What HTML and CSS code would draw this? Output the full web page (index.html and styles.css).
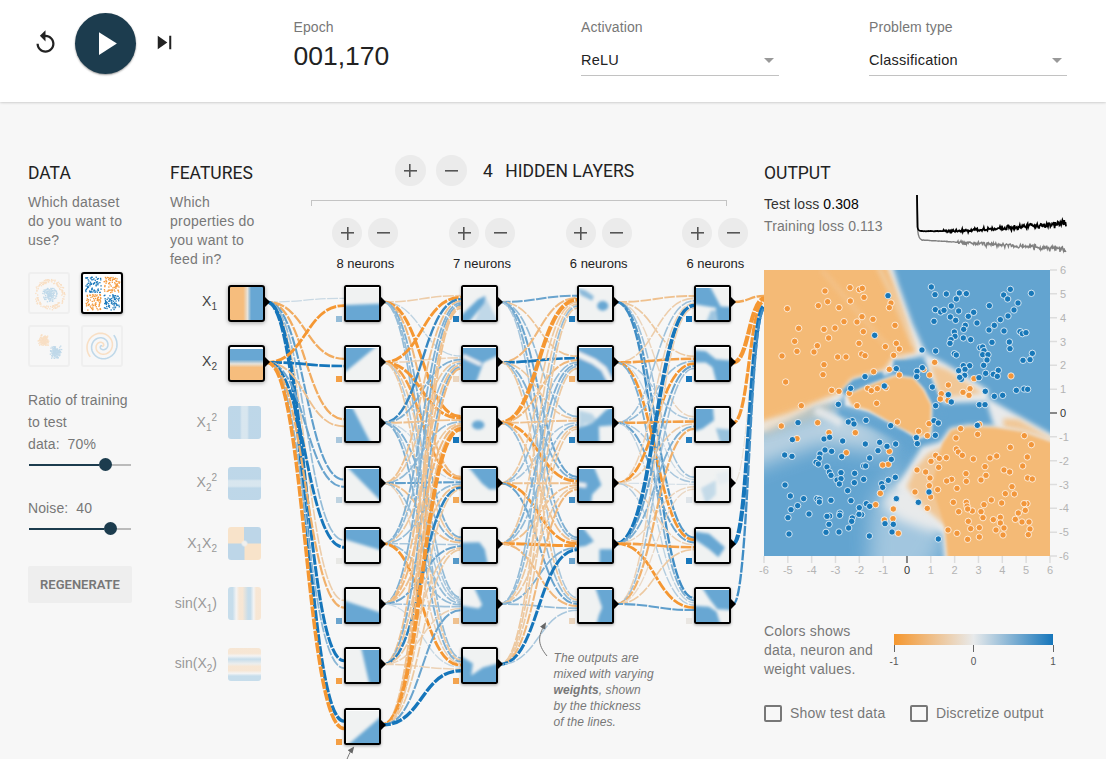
FILE: index.html
```html
<!DOCTYPE html>
<html lang="en">
<head>
<meta charset="utf-8">
<title>Neural network playground</title>
<link rel="stylesheet" href="styles.css">
</head>
<body>
<div class="page">
  <header class="topbar">
    <div class="controls">
      <svg class="icon-reset" viewBox="0 0 24 24"><path d="M12 5V1L7 6l5 5V7c3.31 0 6 2.69 6 6s-2.69 6-6 6-6-2.69-6-6H4c0 4.42 3.58 8 8 8s8-3.58 8-8-3.58-8-8-8z"/></svg>
      <div class="play"><svg viewBox="0 0 24 24"><path d="M8 5v14l11-7z"/></svg></div>
      <svg class="icon-step" viewBox="0 0 24 24"><path d="M6 18l8.5-6L6 6v12zM16.2 6v12h1.8V6h-1.8z"/></svg>
    </div>
    <div class="stat"><div class="label">Epoch</div><div class="epoch">001,170</div></div>
    <div class="stat"><div class="label">Activation</div><div class="select">ReLU<i class="caret"></i></div></div>
    <div class="stat"><div class="label">Problem type</div><div class="select">Classification<i class="caret"></i></div></div>
  </header>
  <svg class="links" id="links" width="1106" height="759" viewBox="0 0 1106 759"></svg>
  <main class="main">
    <section class="data">
      <h3>DATA</h3>
      <p class="lead">Which dataset<br>do you want to<br>use?</p>
      <div class="datasets" id="datasets"></div>
      <div class="slider-label ratio">Ratio of training<br>to test<br>data:&nbsp; 70%</div>
      <div class="slider at-ratio"><span class="fill"></span><span class="knob"></span></div>
      <div class="slider-label noise">Noise:&nbsp; 40</div>
      <div class="slider at-noise"><span class="fill"></span><span class="knob"></span></div>
      <div class="button">REGENERATE</div>
    </section>
    <section class="features">
      <h3>FEATURES</h3>
      <p class="lead">Which<br>properties do<br>you want to<br>feed in?</p>
      <div class="feature-list">
        <div class="feature on"><span class="name">X<sub>1</sub></span><span class="thumb x1"></span></div>
        <div class="feature on"><span class="name">X<sub>2</sub></span><span class="thumb x2"></span></div>
        <div class="feature"><span class="name">X<sub>1</sub><sup>2</sup></span><span class="thumb x1sq"></span></div>
        <div class="feature"><span class="name">X<sub>2</sub><sup>2</sup></span><span class="thumb x2sq"></span></div>
        <div class="feature"><span class="name">X<sub>1</sub>X<sub>2</sub></span><span class="thumb x1x2"></span></div>
        <div class="feature"><span class="name">sin(X<sub>1</sub>)</span><span class="thumb sinx1"></span></div>
        <div class="feature"><span class="name">sin(X<sub>2</sub>)</span><span class="thumb sinx2"></span></div>
      </div>
    </section>
    <section class="network">
      <div class="net-head">
        <span class="round big plus"></span><span class="round big"></span>
        <span class="count">4</span><span>HIDDEN LAYERS</span>
      </div>
      <div class="bracket"></div>
      <div class="layers">
        <div class="layer"><div class="pair"><span class="round plus"></span><span class="round"></span></div><div>8 neurons</div></div>
        <div class="layer"><div class="pair"><span class="round plus"></span><span class="round"></span></div><div>7 neurons</div></div>
        <div class="layer"><div class="pair"><span class="round plus"></span><span class="round"></span></div><div>6 neurons</div></div>
        <div class="layer"><div class="pair"><span class="round plus"></span><span class="round"></span></div><div>6 neurons</div></div>
      </div>
      <div class="callout">The outputs are<br>mixed with varying<br><b>weights</b>, shown<br>by the thickness<br>of the lines.</div>
    </section>
    <section class="output">
      <h3>OUTPUT</h3>
      <div class="metrics">
        <div class="losses"><div class="test">Test loss <b>0.308</b></div><div class="train">Training loss 0.113</div></div>
        <svg id="loss" width="152" height="62" viewBox="0 0 152 62"></svg>
      </div>
      <svg class="plot" id="plot" width="320" height="316" viewBox="-9 0 320 316"></svg>
      <div class="legend">
        <p>Colors shows<br>data, neuron and<br>weight values.</p>
        <div class="scale"><div class="ramp"></div><div class="ticks"><span>-1</span><span>0</span><span>1</span></div></div>
      </div>
      <div class="checks">
        <label><i class="box"></i>Show test data</label>
        <label><i class="box"></i>Discretize output</label>
      </div>
    </section>
  </main>
</div>
<script src="app.js"></script>
</body>
</html>
```
FILE: styles.css
```css
* { box-sizing: border-box; }
body { margin: 0; background: #f7f7f7; font-family: "Liberation Sans", Arial, sans-serif; color: #777; font-size: 14px; overflow: hidden; }
.page { position: relative; width: 1106px; height: 759px; overflow: hidden; }
h3 { margin: 0; font: 400 17.5px/22px Roboto, sans-serif; color: #222; }
p { margin: 0; }

.topbar { display: grid; grid-template-columns: 293.5px 287.5px 288px 198px; height: 102px; background: #fff; box-shadow: 0 0 3px rgba(0,0,0,.3); }
.controls { display: flex; align-items: center; height: 86px; padding-left: 32px; }
.icon-reset { width: 27px; height: 27px; margin-top: -2px; fill: #222; }
.play { display: flex; align-items: center; justify-content: center; width: 61px; height: 61px; margin-left: 16px; border-radius: 50%; background: #1c3c4e; box-shadow: 0 1px 2px rgba(0,0,0,.4); }
.play svg { width: 39px; height: 39px; fill: #fff; }
.icon-step { width: 27px; height: 27px; margin: -1px 0 0 15px; fill: #222; }
.stat { padding-top: 18px; }
.label { line-height: 18px; letter-spacing: .1px; }
.epoch { margin-top: 5px; font-size: 26.5px; line-height: 30px; color: #222; }
.select { display: flex; align-items: center; justify-content: space-between; width: 198px; height: 31px; margin-top: 9px; border-bottom: 1px solid #c2c2c2; color: #222; font-size: 14.5px; letter-spacing: .35px; }
.select { letter-spacing: .25px; }
.caret { margin-right: 5px; border: 5px solid transparent; border-top-color: #999; border-bottom: 0; }

.links { position: absolute; left: 0; top: 0; }
.main { display: grid; grid-template-columns: 142px 140px 454px 342px; padding: 60px 0 0 28px; }
.lead { margin-top: 9px; line-height: 19px; letter-spacing: .22px; }

.datasets { display: grid; grid-template-columns: 42px 42px; gap: 11px; margin-top: 22px; }
.dataset { width: 42px; height: 42px; border: 2px solid #eaeaea; border-radius: 3px; opacity: .6; }
.dataset.chosen { border-color: #000; background: #fff; opacity: 1; box-shadow: 0 1px 3px rgba(0,0,0,.3); }
.dataset svg { display: block; width: 38px; height: 38px; }
.slider-label { line-height: 22px; letter-spacing: .1px; }
.ratio { margin-top: 22px; }
.noise { margin-top: 26px; }
.slider { display: flex; align-items: center; width: 102px; height: 13px; margin: 3px 0 0 1px; background: linear-gradient(#bbb, #bbb) center / 100% 2px no-repeat; }
.fill { height: 2px; background: #1c3c4e; }
.at-ratio .fill { width: 70px; }
.at-noise .fill { width: 75px; }
.knob { width: 13px; height: 13px; border-radius: 50%; background: #1c3c4e; }
.button { width: 104px; height: 37px; margin-top: 31px; border-radius: 2px; background: #eee; color: #777; font: 600 13px/37px Roboto, sans-serif; text-align: center; }

.feature-list { display: flex; flex-direction: column; gap: 23.4px; margin-top: 16px; }
.feature { display: flex; justify-content: flex-end; gap: 11px; width: 95px; height: 37px; padding-right: 4px; color: #999; }
.feature.on { padding-right: 0; color: #444; }
.name { line-height: 33px; white-space: nowrap; }
.name sub, .name sup { font-size: 10px; line-height: 0; }
.name sub { vertical-align: -4px; }
.name sup { vertical-align: 6px; }
.thumb { flex: none; width: 33px; height: 33px; margin-top: .5px; border-radius: 3px; opacity: .4; }
.on .thumb { width: 37px; height: 37px; margin-top: 0; border: 2px solid #000; opacity: 1; box-shadow: 0 1px 4px rgba(0,0,0,.35); }
.x1 { background: linear-gradient(90deg, #f6bd7d 40%, #e6e2da 53%, #68a7d3 64%); }
.x2 { background: linear-gradient(#fff 5%, #68a7d3 6% 38%, #e6e2da 51%, #f6bd7d 62%) padding-box; }
.x1sq { background: linear-gradient(90deg, #68a7d3 36%, #aacde3 42%, #aacde3 58%, #68a7d3 64%); }
.x2sq { background: linear-gradient(#68a7d3 36%, #aacde3 42%, #aacde3 58%, #68a7d3 64%); }
.x1x2 { background: radial-gradient(circle, #e6e6e2 8%, transparent 16%), conic-gradient(#68a7d3 0 24%, #fac689 26% 49%, #68a7d3 51% 74%, #fac689 76% 99%, #68a7d3); }
.sinx1 { background: linear-gradient(90deg, #7eb6d9 14%, #eee 25%, #f6cda0 34%, #f6cda0 44%, #7eb6d9 61%, #7eb6d9 68%, #eee 78%, #f6cda0 85%); }
.sinx2 { background: linear-gradient(#f6cda0 16%, #eee 24%, #7eb6d9 34%, #dce0de 48%, #f6cda0 56%, #f6cda0 68%, #eee 77%, #7eb6d9 85%); }

.network { position: relative; }
.net-head { display: flex; align-items: center; height: 31px; margin: -7px 0 0 84.5px; font: 400 17.5px/31px Roboto, sans-serif; color: #222; }
.net-head .round + .round { margin-left: 10px; }
.net-head .count, .net-head .count + span { padding-top: 2px; }
.count { margin: 0 12.5px 0 16.5px; }
.round { display: block; width: 30px; height: 30px; border-radius: 50%; background: linear-gradient(#555, #555) center / 13px 1.6px no-repeat #ebebeb; }
.round.big { width: 31px; height: 31px; }
.round.plus { background: linear-gradient(#555, #555) center / 13px 1.6px no-repeat, linear-gradient(#555, #555) center / 1.6px 13px no-repeat #ebebeb; }
.bracket { width: 416px; height: 6px; margin: 14px 0 0 1px; border: 1px solid #c4c4c4; border-bottom: 0; }
.layers { display: grid; grid-template-columns: repeat(4, 116.7px); margin: 12px 0 0 -3px; }
.layer { color: #222; font-size: 13px; line-height: 20px; text-align: center; }
.pair { display: flex; justify-content: center; gap: 6px; margin-bottom: 6px; }
.callout { position: absolute; left: 243.5px; top: 488px; font: italic 12px/16px "Liberation Sans", sans-serif; letter-spacing: .08px; color: #777; }

.output { position: relative; }
.metrics { display: flex; justify-content: space-between; width: 303px; height: 86px; }
.losses { padding-top: 9px; line-height: 22px; letter-spacing: .1px; white-space: nowrap; }
.test { color: #333; }
.test b { font-weight: 400; color: #000; }
#loss { margin-top: 10px; }
.plot { display: block; margin-left: -9px; overflow: visible; }
.legend { display: flex; gap: 20px; margin-top: 36px; line-height: 19px; letter-spacing: .2px; white-space: nowrap; }
.legend p { width: 110px; }
.scale { width: 159px; padding-top: 12px; }
.ramp { height: 11px; background: linear-gradient(90deg, #f5972f, #e8eaeb, #1676bb); }
.ticks { display: flex; justify-content: space-between; margin: 0 -10px; font-size: 10px; line-height: 20px; letter-spacing: 0; color: #555; }
.ticks span { width: 20px; text-align: center; }
.ticks span::before { content: ""; display: block; width: 1px; height: 7px; margin: 0 auto; background: #666; }
.checks { display: flex; gap: 25px; margin-top: 25px; line-height: 19px; letter-spacing: .2px; }
.checks label { display: flex; align-items: center; gap: 8px; white-space: nowrap; }
.checks label:first-child { width: 121px; }
.box { flex: none; width: 18px; height: 17px; border: 2px solid #777; border-radius: 2px; }
```
FILE: app.js
```js
let seed = 7;
const rand = () => (seed = (seed * 16807) % 2147483647) / 2147483647;
const gauss = () => rand() + rand() + rand() - 1.5;
const BLUE = "#1a78bb", ORANGE = "#f5993a";

function mix(v) {
  const end = v > 0 ? [22, 118, 187] : [245, 151, 50];
  const a = Math.min(1, Math.abs(v));
  return "rgb(" + [232, 234, 235].map((c, i) => Math.round(c + (end[i] - c) * a)).join(",") + ")";
}

/* Network: one weight matrix per pair of adjacent layers, [source][target]. */
const weights = [
  [[.15, -.75, -.75, .65, .4, -.35, 1.2, 1.4],
   [-1.1, 1, -.5, .6, 1.1, -.7, .45, -1.5]],
  [[-.35, .2, -1.2, -.6, .5, .4, .4],
   [-1.1, -.3, -1.2, -.9, -.4, .3, -.4],
   [.85, .5, -.5, .15, .5, .3, .5],
   [-.5, -.4, .4, .65, -.5, .4, -.3],
   [.5, .4, -.4, .4, .3, .4, -1.1],
   [.5, -.5, -.6, -.5, .6, .35, .15],
   [-.5, .5, -.45, .9, -.4, -.3, -.3],
   [-.5, -.6, -1.8, -.4, -.4, .6, 1.4]],
  [[.6, -.45, .4, .6, .5, .3],
   [-.6, 1, -.4, .5, .4, -.4],
   [-1.8, -.6, -.5, -1.1, -.5, .4],
   [-.4, .4, .3, -.5, -1, .6],
   [-.4, .5, .4, -.5, -1.2, -.6],
   [.4, .4, -.4, -.4, .5, .4],
   [-.4, -.4, -.4, -.6, 1.2, .3]],
  [[-.5, -.4, -.25, .35, .7, .8],
   [-.35, -.9, .3, .15, -1, .5],
   [.35, .4, -.9, .3, .6, .2],
   [-.3, -1, -.35, .1, -.3, .25],
   [1.7, .6, .5, -.25, -.9, -1.1],
   [-.3, .35, -.7, -.2, -.4, .65]],
  [[-.8], [-1.9], [-1.3], [-.1], [1.9], [.8]]
];
const bias = [
  [.4, -.9, .3, .2, -.03, .6, -.9, -.9],
  [.95, -.25, 1, -.8, .7, -.5, -.85],
  [.95, -.7, .9, .8, .6, -.25],
  [1, 1, .95, .05, 1, -.05]
];
/* Neuron previews in a 100x100 box. */
const P = (d, o = 1) => `<polygon points="${d}" fill="#68a7d3" opacity="${o}"/>`;
const W = (d, w) => `<polyline points="${d}" fill="none" stroke="#f0f2f2" stroke-width="${w}"/>`;
const art = [
  [P("-20,54 120,48 120,120 -20,120"), P("-20,-20 110,-20 -20,90"), P("-20,-20 12,-20 82,120 -20,120"),
   P("-10,-20 120,-20 120,115"), P("-20,-20 120,-20 120,68 -20,24"), P("-20,28 120,76 120,120 -20,120"),
   P("43,-20 120,-20 120,120 74,120"), P("120,5 120,120 -10,120")],
  [P("-20,100 45,36 68,24 64,48 20,104 -20,120", 1) + P("66,25 110,110 30,120", .35),
   P("-20,-20 120,-20 120,16 62,45 35,120 -20,120") + W("0,25 55,52", 12),
   `<ellipse cx="46" cy="50" rx="19" ry="14" fill="#68a7d3"/>`, P("5,-20 120,-20 120,62 80,64 58,45"),
   P("-20,40 50,38 66,60 78,120 -20,120"),
   P("28,-20 120,-20 120,120 -20,120 -20,46 48,58 58,46"), P("-20,10 30,42 25,80 60,55 120,38 120,120 -20,120")],
  [P("-5,0 20,8 45,26 40,40 5,22", .75) + `<ellipse cx="72" cy="56" rx="17" ry="15" fill="#68a7d3"/>`,
   P("-20,-20 120,-20 120,120 -20,120") + W("-20,12 45,42 75,65 100,115", 18),
   P("120,-20 120,50 60,55 62,120 -20,120 -20,65 40,45 80,5") + P("0,5 40,15 65,50 20,45 0,60", .4),
   P("-20,-20 40,-20 68,50 40,80 35,120 -20,120") + W("-5,48 22,52", 14),
   P("-20,-20 10,-10 45,35 20,50 -20,55") + P("62,60 120,60 120,120 62,120"),
   P("45,-20 120,-20 120,120 50,120 60,80 70,55")],
  [P("-20,-20 35,-20 75,58 120,60 120,120 66,120 60,62 -20,48") + P("30,110 45,70 62,70 62,110", .6),
   P("-20,5 30,10 60,35 120,40 120,120 65,120 50,60 30,45 -20,45"),
   P("-20,-20 50,-20 55,35 20,62 -20,75") + P("60,60 120,66 120,120 75,110", .65),
   P("15,60 60,35 60,80 30,110", .32) + P("60,15 100,5 100,40 70,50", .08),
   P("-5,5 40,12 88,55 68,85 40,60 -5,28"),
   P("10,-20 120,-20 120,64 65,60 42,30") + P("-20,48 40,52 62,68 78,120 -20,120")]
];

function buildNetwork() {
  const left = [228, 344, 460.8, 577.3, 694.2, 765];
  const sizes = [2, 8, 7, 6, 6, 1];
  const cy = i => 302 + 60.4 * i;
  let s = `<defs><filter id="soft" filterUnits="userSpaceOnUse" x="-40" y="-40" width="180" height="180"><feGaussianBlur stdDeviation="5"/></filter>
    <filter id="drop" x="-20%" y="-20%" width="150%" height="150%"><feDropShadow dx="0" dy="1" stdDeviation="1.5" flood-opacity=".35"/></filter>
    <marker id="tip" markerWidth="8" markerHeight="8" refX="5" refY="3" orient="auto"><path d="M0 0L7 3L0 6z" fill="#666"/></marker></defs>`;
  weights.forEach((m, l) => m.forEach((row, i) => row.forEach((w, j) => {
    const sx = left[l] + 39, sy = cy(i), tx = left[l + 1];
    const ty = cy(j) + (i - (sizes[l] - 1) / 2) / sizes[l] * 14.5;
    const mx = (sx + tx) / 2;
    s += `<path d="M${sx} ${sy}C${mx} ${sy} ${mx} ${ty} ${tx} ${ty}" fill="none" stroke="${mix(w)}" stroke-width="${(1 + 1.7 * Math.abs(w)).toFixed(2)}" stroke-dasharray="10.7 1.4" stroke-dashoffset="${(i * 3 + j * 5) % 12}"/>`;
  })));
  for (let l = 0; l < 5; l++) for (let i = 0; i < sizes[l]; i++) {
    const x = Math.round(left[l]), y = Math.round(cy(i) - 17);
    s += `<path d="M${x + 36} ${y + 11}l6 6l-6 6z"/>`;
    if (!l) continue;
    s += `<rect x="${x - 8}" y="${y + 31}" width="6" height="6" fill="${mix(bias[l - 1][i])}"/>
      <g filter="url(#drop)"><rect x="${x}" y="${y}" width="37" height="37" rx="2.5"/></g>
      <svg x="${x + 2}" y="${y + 2}" width="33" height="33" viewBox="0 0 100 100"><rect width="100" height="100" fill="#fff"/>
      <svg x="0" y="3" width="100" height="97" viewBox="0 0 100 100" preserveAspectRatio="none"><rect width="100" height="100" fill="#f0f2f2"/><g filter="url(#soft)">${art[l - 1][i]}</g></svg></svg>`;
  }
  s += `<g fill="none" stroke="#777" stroke-width="1"><path d="M547 656C537 644 538 636 545 624" marker-end="url(#tip)"/><path d="M346 762C348 756 350 752 353 748" marker-end="url(#tip)"/></g>`;
  document.getElementById("links").innerHTML = s;
}

function buildDatasets() {
  const dot = (x, y, c) => `<rect x="${x.toFixed(1)}" y="${y.toFixed(1)}" width="1.3" height="1.3" fill="${c}"/>`;
  const lightB = "#9cc5e0", lightO = "#fad0a4";
  let a = "", b = "", c = "", d = "";
  for (let i = 0; i < 150; i++) {
    let t = rand() * 6.283, r = 11.5 + rand() * 4;
    a += dot(19 + r * Math.cos(t), 20 + r * Math.sin(t), lightO);
    t = rand() * 6.283; r = rand() * 7.5;
    a += dot(19 + r * Math.cos(t), 20 + r * Math.sin(t), lightB);
    c += dot(13 + gauss() * 4.5, 13 + gauss() * 4.5, lightO);
    c += dot(25 + gauss() * 4.5, 24.5 + gauss() * 5, lightB);
  }
  for (let i = 0; i < 75; i++) [[0, 0, BLUE], [1, 0, ORANGE], [0, 1, ORANGE], [1, 1, BLUE]].forEach(q => {
    b += dot(2 + q[0] * 18.5 + rand() * 15.5, 2.5 + q[1] * 17.5 + rand() * 15.5, q[2]);
  });
  for (const [phase, col] of [[0, lightB], [Math.PI, lightO]]) {
    let p = "";
    for (let i = 0; i <= 80; i++) {
      const r = i / 80 * 16, t = i / 80 * 11 - 2.4 + phase;
      p += (i ? "L" : "M") + (19 + r * Math.sin(t)).toFixed(1) + " " + (19 + r * Math.cos(t)).toFixed(1);
    }
    d += `<path d="${p}" fill="none" stroke="${col}" stroke-width="1.6"/>`;
  }
  document.getElementById("datasets").innerHTML = [a, b, c, d].map((g, i) =>
    `<div class="dataset${i === 1 ? " chosen" : ""}"><svg viewBox="0 0 38 38">${g}</svg></div>`).join("");
}

function buildLoss() {
  let t = "M2 1L2.5 33Q3 37 6 37", r = "M2 1L2.8 37Q3.5 45 7 46";
  for (let x = 7; x <= 151; x += .6) {
    const k = (x - 7) / 144;
    const n = k < .15 ? .3 : .6 + 3.2 * k;
    t += `L${x.toFixed(1)} ${(37.2 - 6.5 * k * k - 2.5 * Math.max(0, k - .2) + gauss() * n).toFixed(1)}`;
    r += `L${x.toFixed(1)} ${(46 + 9 * k + gauss() * (k < .25 ? .2 : 1 + 2.5 * k)).toFixed(1)}`;
  }
  document.getElementById("loss").innerHTML = `<path d="${r}" fill="none" stroke="#808080" stroke-width="1.4"/><path d="${t}" fill="none" stroke="#000" stroke-width="1.8"/>`;
}

/* Sample points, in a grid three times finer than the plot's pixels. */
const orange = [[285,83],[313,89],[322,85],[210,93],[218,125],[190,137],[97,146],[286,123],[327,112],[252,143],[408,129],[403,143],[321,170],[354,178],[306,186],[267,185],[420,196],[131,205],[207,208],[240,204],[325,215],[221,234],[119,244],[187,257],[126,274],[177,276],[81,288],[312,250],[320,282],[330,287],[273,291],[248,291],[391,260],[424,250],[433,267],[416,286],[207,314],[204,344],[92,366],[356,335],[403,328],[433,345],[230,391],[252,394],[283,400],[338,385],[349,392],[367,386],[393,383],[139,437],[306,437],[365,430],[79,498],[188,488],[427,486],[126,536],[222,518],[301,518],[274,578],[491,514],[517,527],[522,491],[484,535],[539,307],[524,345],[506,328],[580,375],[559,401],[556,417],[579,421],[624,397],[645,386],[642,406],[657,356],[768,348],[673,493],[617,506],[668,523],[603,534],[808,527],[829,554],[766,562],[604,567],[610,576],[622,586],[655,597],[705,594],[725,588],[817,591],[803,618],[542,586],[553,595],[574,593],[528,604],[551,622],[486,630],[512,636],[525,654],[523,677],[548,689],[480,696],[527,711],[517,745],[690,620],[693,646],[678,660],[747,630],[764,636],[633,641],[634,664],[590,658],[575,663],[606,685],[818,654],[832,657],[771,680],[751,701],[778,702],[709,720],[740,729],[687,734],[595,727],[634,727],[636,738],[611,755],[652,753],[678,755],[638,747],[816,731],[807,731],[811,751],[790,759],[781,778],[801,786],[822,786],[825,807],[820,824],[684,773],[715,779],[736,772],[736,789],[640,784],[647,806],[673,803],[723,810],[747,804],[744,825],[579,810],[606,820],[638,838],[673,831],[403,574],[400,613],[383,615],[376,700],[362,734],[415,747],[388,780],[414,776],[430,820]];
const blue = [[399,107],[359,226],[529,81],[540,104],[574,102],[613,99],[634,101],[604,117],[589,138],[541,149],[557,156],[567,151],[611,153],[656,157],[640,169],[586,171],[602,181],[537,184],[666,189],[631,196],[626,208],[598,216],[600,229],[588,239],[585,250],[625,234],[647,239],[703,137],[746,105],[766,88],[758,117],[789,129],[777,150],[759,168],[736,179],[718,196],[702,210],[747,213],[829,100],[795,215],[802,221],[813,218],[763,246],[765,266],[711,247],[832,280],[825,299],[804,301],[675,263],[683,261],[687,272],[683,284],[699,284],[696,300],[686,316],[598,281],[604,285],[542,273],[501,270],[424,326],[502,323],[486,334],[485,350],[330,350],[287,385],[388,378],[250,433],[625,317],[644,317],[611,332],[630,328],[629,346],[619,358],[614,352],[672,353],[692,340],[730,331],[715,343],[727,349],[691,394],[718,409],[743,406],[784,391],[807,387],[818,388],[532,381],[580,404],[589,426],[542,437],[673,434],[690,434],[537,482],[550,489],[667,496],[541,526],[484,533],[487,551],[422,552],[396,559],[374,547],[369,572],[331,552],[407,497],[333,481],[292,482],[280,486],[297,492],[129,488],[112,539],[207,537],[224,532],[263,543],[210,570],[230,574],[195,582],[89,585],[111,589],[260,590],[344,594],[193,595],[183,607],[190,612],[216,621],[326,618],[332,618],[223,636],[228,646],[258,638],[299,640],[246,660],[258,656],[253,672],[298,668],[326,658],[278,692],[409,598],[421,652],[400,661],[380,671],[383,682],[424,716],[490,727],[522,696],[90,675],[106,708],[146,716],[128,737],[108,749],[99,773],[162,762],[102,822],[186,716],[193,718],[193,726],[228,721],[288,722],[313,743],[334,731],[344,739],[255,759],[254,766],[224,768],[216,769],[292,774],[290,784],[320,764],[312,763],[222,793],[281,804],[213,817],[252,816],[343,828],[390,791],[415,793],[411,816],[550,837]];

function buildPlot() {
  const poly = (pts, fill, blur, extra = "") => `<polygon points="${pts}" fill="${fill}" filter="url(#b${blur})" ${extra}/>`;
  const line = (pts, col, w, blur, o = 1) => `<polyline points="${pts}" fill="none" stroke="${col}" stroke-width="${w}" stroke-linejoin="round" filter="url(#b${blur})" opacity="${o}"/>`;
  const O = "#f4ba76", B = "#63a4d0", L = "#e8eaeb";
  let s = "<defs>" + [4, 8, 16, 30].map(b => `<filter id="b${b}" filterUnits="userSpaceOnUse" x="-150" y="-150" width="1250" height="1250"><feGaussianBlur stdDeviation="${b}"/></filter>`).join("") + "</defs>";
  s += `<svg width="286" height="286" viewBox="27 30 858 858"><rect x="27" y="30" width="858" height="858" fill="${B}"/>`;
  s += poly("-50,540 150,480 260,440 400,530 430,580 340,570 200,550 80,590 -50,640", L, 30, 'opacity=".7"');
  s += poly("470,600 560,790 570,850 500,960 340,960 350,740 410,640", "#c4d9e7", 30, 'opacity=".65"');
  s += poly("450,650 560,800 540,820 430,780 380,730", L, 16);
  s += line("435,560 455,610 425,670", B, 30, 16, .8);
  s += poly("-50,-50 385,-50 425,80 465,190 505,280 430,296 400,336 290,366 250,418 180,434 -50,545", L, 8, `stroke="${L}" stroke-width="14"`);
  s += poly("-100,-100 350,-100 415,70 453,180 484,278 415,290 390,328 290,356 258,396 180,428 100,462 -100,520", O, 8);
  s += line("200,30 380,240 450,300", "#f2c899", 12, 8, .6);
  s += line("370,20 415,110 478,260", "#edd9bf", 12, 8, .7);
  s += line("20,512 120,472 230,438", "#f0d3ae", 24, 16, .9);
  s += poly("505,275 570,310 700,390 700,425 560,430 520,360", L, 8);
  s += poly("524,310 580,330 684,400 556,414", "#f1c796", 8);
  s += line("415,312 500,318 545,430 560,470", B, 26, 4);
  s += line("268,402 300,370 385,346", B, 24, 4);
  s += poly("268,407 345,373 420,344 477,353 507,386 532,435 530,524 490,538 430,506 340,457 270,438", L, 4);
  s += poly("275,405 345,376 420,348 475,355 505,390 528,435 526,518 490,532 430,500 340,450 290,435", O, 4);
  s += line("250,455 350,485 440,530 470,565", B, 30, 8, .95);
  s += line("180,450 225,470 260,490", L, 26, 8, .9);
  s += poly("690,410 760,450 920,540 920,575 720,510", L, 8);
  s += poly("745,475 790,478 930,560 840,545 745,510", "#f1c796", 8);
  s += poly("555,545 585,505 640,494 720,497 800,510 930,550 940,960 572,960 562,820 480,755 425,680 470,610 500,560", L, 8);
  s += poly("565,560 590,510 640,500 720,503 800,515 940,565 940,960 584,960 574,800 500,735 455,680 480,625 520,580", "#f1c796", 8);
  s += poly("563,550 590,512 640,502 720,505 800,517 950,570 950,950 584,950 570,800 530,680 555,580", O, 4);
  const dots = (list, c) => list.map(p => `<circle cx="${p[0]}" cy="${p[1]}" r="9.6" fill="${c}" stroke="#fff" stroke-opacity=".82" stroke-width="2.8"/>`).join("");
  s += dots(orange, "#f2963a") + dots(blue, "#1878b9") + "</svg>";
  for (let v = -6; v <= 6; v++) {
    const x = (v + 6) * 23.83, y = 286 - x, zero = v === 0;
    const st = zero ? 'stroke="#888" stroke-width="2"' : 'stroke="#ddd" stroke-width="1.5"';
    const f = zero ? "#333" : "#b4b4b4";
    s += `<path d="M${x} 286v7M286 ${y}h7" ${st}/><text x="${x}" y="304" text-anchor="middle" font-size="11" fill="${f}">${v}</text><text x="${v < 0 ? 295 : 296}" y="${y + 4}" font-size="11" fill="${f}">${v}</text>`;
  }
  document.getElementById("plot").innerHTML = s;
}

buildNetwork();
buildDatasets();
buildLoss();
buildPlot();
```
